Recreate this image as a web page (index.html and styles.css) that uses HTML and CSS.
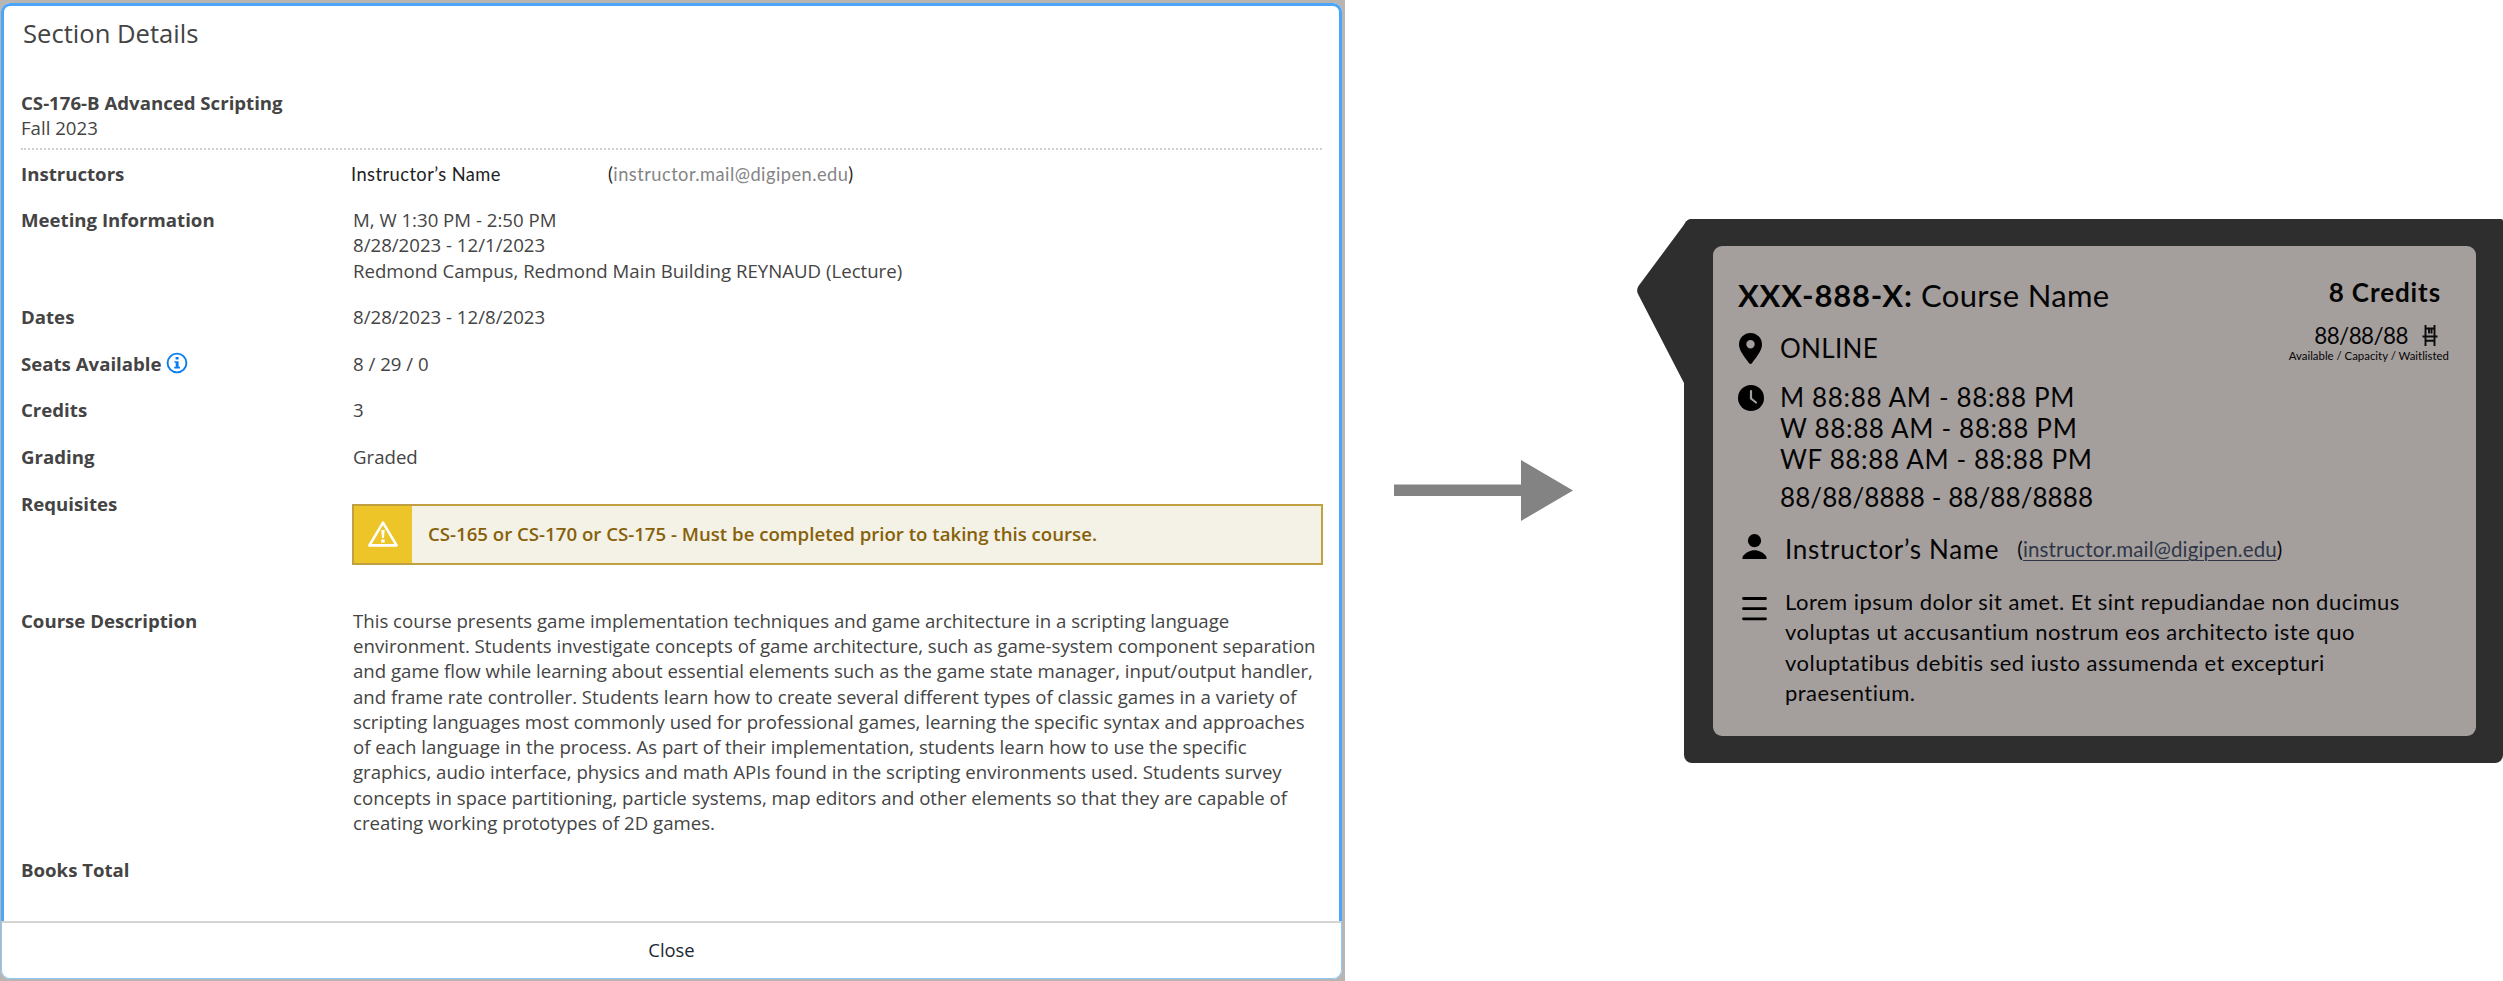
FILE: index.html
```html
<!DOCTYPE html>
<html lang="en">
<head>
<meta charset="utf-8">
<title>Section Details</title>
<link rel="stylesheet" href="styles.css">
</head>
<body>
<main class="page">
  <div class="backdrop">
    <section class="dialog">
      <div class="dialog-main">
        <h1 class="title">Section Details</h1>
        <header class="course">
          <div class="course-code">CS-176-B Advanced Scripting</div>
          <div>Fall 2023</div>
        </header>
        <dl class="rows">
          <dt>Instructors</dt>
          <dd class="teacher"><span class="teacher-name">Instructor’s Name</span><span class="teacher-mail">(<span class="addr">instructor.mail@digipen.edu</span>)</span></dd>
          <dt>Meeting Information</dt>
          <dd><span class="line">M, W 1:30 PM - 2:50 PM</span><span class="line">8/28/2023 - 12/1/2023</span><span class="line">Redmond Campus, Redmond Main Building REYNAUD (Lecture)</span></dd>
          <dt>Dates</dt>
          <dd>8/28/2023 - 12/8/2023</dd>
          <dt class="seats"><span>Seats Available</span>
            <svg class="info" viewBox="0 0 22 22"><circle cx="11" cy="11" r="9.4" fill="none" stroke="#0b7cf0" stroke-width="1.9"/><path d="M9.6 5h3v2.6h-3zM8.4 9.2h4.2v5.6h1.4v1.6H8.2v-1.6h1.5v-4H8.4z" fill="#0b7cf0"/></svg>
          </dt>
          <dd>8 / 29 / 0</dd>
          <dt>Credits</dt>
          <dd>3</dd>
          <dt>Grading</dt>
          <dd>Graded</dd>
          <dt>Requisites</dt>
          <dd>
            <div class="alert">
              <div class="alert-icon"><svg viewBox="0 0 32 28"><path d="M16 2.6 29.6 25.4H2.4z" fill="none" stroke="#fff" stroke-width="2.6" stroke-linejoin="round"/><path d="M14.3 10h3.4l-.7 8h-2zM14.3 19.6h3.4v3h-3.4z" fill="#fff"/></svg></div>
              <div class="alert-text">CS-165 or CS-170 or CS-175 - Must be completed prior to taking this course.</div>
            </div>
          </dd>
          <dt>Course Description</dt>
          <dd><span class="line">This course presents game implementation techniques and game architecture in a scripting language</span><span class="line">environment. Students investigate concepts of game architecture, such as game-system component separation</span><span class="line">and game flow while learning about essential elements such as the game state manager, input/output handler,</span><span class="line">and frame rate controller. Students learn how to create several different types of classic games in a variety of</span><span class="line">scripting languages most commonly used for professional games, learning the specific syntax and approaches</span><span class="line">of each language in the process. As part of their implementation, students learn how to use the specific</span><span class="line">graphics, audio interface, physics and math APIs found in the scripting environments used. Students survey</span><span class="line">concepts in space partitioning, particle systems, map editors and other elements so that they are capable of</span><span class="line">creating working prototypes of 2D games.</span></dd>
          <dt>Books Total</dt>
          <dd></dd>
        </dl>
      </div>
      <footer class="dialog-foot">Close</footer>
    </section>
  </div>
  <svg class="arrow" viewBox="0 0 180 64"><path d="M0 25.5h127V1l52 30.5-52 30.5V37H0z" fill="#838383"/></svg>
  <article class="card">
    <svg class="pointer" viewBox="0 0 60 170"><path d="M60 0H55q-4 0-6 3L1.500 67Q-1 71 1 75L48 166H60z" fill="#2e2e2e"/></svg>
    <div class="panel">
      <div class="head">
        <h2 class="name"><b>XXX-888-X:</b> <span>Course Name</span></h2>
        <div class="side">
          <div class="credits">8 Credits</div>
          <div class="count"><span>88/88/88</span>
            <svg class="chair" viewBox="0 0 16 21"><path d="M3.500 0v21M12.500 0v21M3.500 3.500h9M7 4v4.500M9.500 4v4.500M.5 11.500h15M3.500 15.800h9" stroke="#0b0b0b" stroke-width="1.900" fill="none"/></svg>
          </div>
          <div class="legend">Available / Capacity / Waitlisted</div>
        </div>
      </div>
      <div class="row place">
        <svg class="ico pin" viewBox="0 0 24 32"><path fill-rule="evenodd" d="M12 0a11.500 11.500 0 0 1 11.500 11.500C23.500 18 17 25 13.600 30q-1.600 2-3.200 0C7 25 .5 18 .5 11.500A11.500 11.500 0 0 1 12 0zm0 7a4.200 4.200 0 1 0 0 8.400A4.200 4.200 0 0 0 12 7z"/></svg>
        <span>ONLINE</span>
      </div>
      <div class="row time">
        <svg class="ico clock" viewBox="0 0 26 26"><circle cx="13" cy="13" r="13"/><path d="M13 6v7.500l5 4" fill="none" stroke="#a49e9d" stroke-width="2.200" stroke-linecap="round"/></svg>
        <div class="times"><span class="line">M 88:88 AM - 88:88 PM</span><span class="line">W 88:88 AM - 88:88 PM</span><span class="line">WF 88:88 AM - 88:88 PM</span><span class="line range">88/88/8888 - 88/88/8888</span></div>
      </div>
      <div class="row person">
        <svg class="ico" viewBox="0 0 24 25"><circle cx="12" cy="6.700" r="6.600"/><path d="M0 25v-2C3 18.500 7.500 16.300 12 16.300S21 18.500 24 23v2z"/></svg>
        <span class="who">Instructor’s Name</span>
        <span class="mail">(<u>instructor.mail@digipen.edu</u>)</span>
      </div>
      <div class="row about">
        <svg class="ico menu" viewBox="0 0 25 24"><path d="M1.500 2h22M1.500 12.200h22M1.500 22.300h22" stroke="#000" stroke-width="2.800" stroke-linecap="round"/></svg>
        <p class="lorem"><span class="line">Lorem ipsum dolor sit amet. Et sint repudiandae non ducimus</span><span class="line">voluptas ut accusantium nostrum eos architecto iste quo</span><span class="line">voluptatibus debitis sed iusto assumenda et excepturi</span><span class="line">praesentium.</span></p>
      </div>
    </div>
  </article>
</main>
</body>
</html>
```
FILE: styles.css
```css
* { box-sizing: border-box; }
body { margin: 0; background: #fff; color: #444; font: 18.64px/25.25px "Open Sans", "Noto Sans", sans-serif; }
.page { display: flex; width: 2503px; height: 981px; overflow: hidden; }
.backdrop { width: 1345px; height: 981px; padding: 3px 3px 2px 1px; background: #b9b5b3; flex: none; }
.dialog { height: 976px; display: flex; flex-direction: column; background: #fff; border-radius: 9px; }
.dialog-main { height: 917.5px; border: 3px solid #4ba6fb; border-bottom: 0; border-radius: 9px 9px 0 0; padding: 11px 16px 0 17px; }
.title { margin: 0 0 0 2px; font-size: 25.6px; line-height: 34px; font-weight: 400; height: 73px; }
.course { width: 1301px; height: 60px; border-bottom: 2px dotted #cfcfcf; }
.course-code, dt { font-weight: 700; }
span { white-space: nowrap; }
.line { display: block; width: max-content; }
.rows { display: grid; grid-template-columns: 332px 969px; margin: 10.5px 0 0; row-gap: 21.35px; }
dt, dd { margin: 0; }
.teacher { display: flex; align-items: baseline; margin-left: -2px; font-family: Lato, sans-serif; font-size: 18.3px; letter-spacing: 0.45px; color: #222; padding-top: 1px; height: 25px; }
.teacher-name { width: 257px; }
.addr { color: #858585; }
.seats { display: flex; align-items: center; gap: 5px; }
.info { width: 22px; height: 22px; }
.alert { display: flex; width: 971px; height: 61px; margin: 13px 0 22px -1px; border: 2px solid #c0a040; background: #f4f1e6; }
.alert-icon { width: 58px; background: #edc528; display: flex; align-items: center; justify-content: center; }
.alert-icon svg { width: 32px; height: 28px; }
.alert-text { padding: 15.5px 0 0 16px; color: #86610a; font-weight: 600; white-space: nowrap; }
.dialog-foot { flex: 1; border: 1.5px solid #8cc8fb; border-top: 2px solid #d4d4d4; border-radius: 0 0 9px 9px; text-align: center; padding-top: 14px; font-size: 18.4px; color: #1c2733; }
.arrow { width: 180px; height: 64px; margin: 459px 0 0 49px; flex: none; }
.card { position: relative; width: 819px; height: 544.5px; margin: 218.5px 0 0 110px; padding: 27px 27px 27px 29px; background: #2e2e2e; border-radius: 8px 2px 8px 8px; flex: none; }
.pointer { position: absolute; left: -47px; top: 0; width: 60px; height: 170px; }
.panel { height: 490px; border-radius: 9px; background: #a49e9d; padding: 0 27px 0 25px; font-family: Lato, sans-serif; color: #050505; font-size: 26px; line-height: 31.2px; }
.head { display: flex; justify-content: space-between; height: 86px; }
.name { margin: 0; padding-top: 31px; font-size: 31px; line-height: 36px; font-weight: 400; letter-spacing: 0.35px; white-space: nowrap; }
.name b { letter-spacing: 0.8px; }
.side { display: flex; flex-direction: column; align-items: flex-end; padding-top: 30px; }
.credits { font-weight: 700; line-height: 32px; letter-spacing: 0.9px; padding-right: 8px; }
.count { display: flex; align-items: center; gap: 14px; font-size: 22.4px; letter-spacing: -0.55px; line-height: 28px; padding: 14px 11px 0 0; }
.chair { width: 16px; height: 21px; }
.legend { font-size: 11.4px; line-height: 12px; }
.row { display: flex; align-items: flex-start; }
.ico { width: 25px; height: 25px; flex: none; }
.place { height: 50px; gap: 17px; padding-top: 1px; letter-spacing: 0.3px; }
.pin { height: 32px; }
.time { gap: 16px; letter-spacing: 0.65px; }
.clock { width: 26px; height: 26px; margin-top: 3px; }
.range { margin-top: 6.5px; letter-spacing: 0.08px; }
.person { padding: 21px 0 0 4px; gap: 18px; letter-spacing: 0.7px; }
.mail { font-size: 20.5px; letter-spacing: 0.15px; }
u { color: #2f3747; text-decoration-thickness: 1px; text-underline-offset: 3px; }
.about { padding: 22px 0 0 4px; gap: 18px; letter-spacing: 0.48px; }
.menu { margin-top: 9px; }
.lorem { margin: 0; font-size: 22px; line-height: 30.4px; }
```
